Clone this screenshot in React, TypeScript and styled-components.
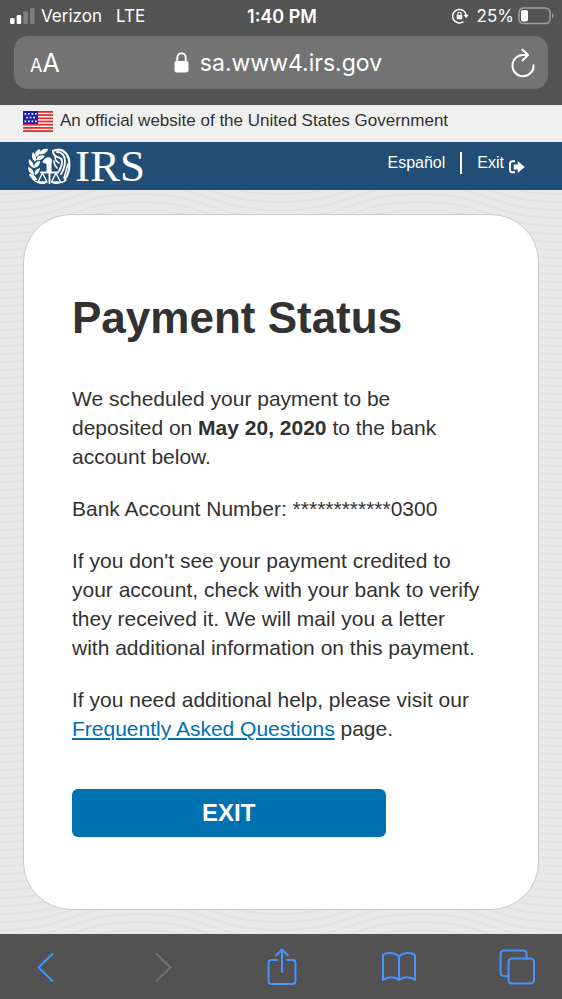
import React from "react";
import styled, { createGlobalStyle } from "styled-components";

const Global = createGlobalStyle`
  * { box-sizing: border-box; }
  body { margin: 0; background: #e8e8e8; color: #323232; font-family: "Liberation Sans", Arial, sans-serif; }
  button, input { font: inherit; color: inherit; }
`;

const Screen = styled.div`
  min-height: 100vh;
  display: flex;
  flex-direction: column;
`;

const BrowserTop = styled.header`
  height: 105px;
  padding: 0 14px;
  background: #545454;
  color: #fff;
  font-family: Inter, "Liberation Sans", sans-serif;
`;

const StatusBar = styled.div`
  height: 36px;
  margin: 0 -6px 0 -4px;
  padding-bottom: 4px;
  display: grid;
  grid-template-columns: 1fr auto 1fr;
  align-items: center;
  font-size: 17px;
`;

const StatusGroup = styled.div<{ $end?: boolean }>`
  display: flex;
  align-items: center;
  gap: ${(p) => (p.$end ? 4 : 6)}px;
  justify-content: ${(p) => (p.$end ? "flex-end" : "flex-start")};
`;

const Network = styled.span`
  margin-left: 8px;
`;

const Charge = styled.span`
  margin-left: 4px;
`;

const Time = styled.time`
  font-size: 18px;
  font-weight: 600;
`;

const AddressBar = styled.form`
  height: 53px;
  padding: 0 12px 0 16px;
  display: flex;
  align-items: center;
  justify-content: space-between;
  border-radius: 14px;
  background: #737373;
`;

const IconButton = styled.button`
  padding: 0;
  display: flex;
  align-items: baseline;
  border: 0;
  background: none;
  cursor: pointer;
`;

const SmallA = styled.span`
  font-size: 18px;
`;

const LargeA = styled.span`
  font-size: 25px;
`;

const Location = styled.label`
  display: flex;
  align-items: center;
  gap: 11px;
`;

const Address = styled.input`
  width: 196px;
  padding: 0;
  border: 0;
  outline: 0;
  background: none;
  font-size: 23px;
`;

const OfficialBanner = styled.div`
  height: 37px;
  padding: 0 23px 5px;
  display: flex;
  align-items: center;
  gap: 7px;
  background: #f0f0f0;
  font-size: 17px;
`;

const SiteHeader = styled.div`
  height: 48px;
  padding: 0 37px 0 28px;
  display: flex;
  align-items: center;
  justify-content: space-between;
  background: #224e76;
  color: #fff;
`;

const Brand = styled.a`
  display: flex;
  align-items: center;
  gap: 4px;
  color: inherit;
  text-decoration: none;
  font: 45px/48px "Liberation Serif", "Times New Roman", serif;
`;

const SiteNav = styled.nav`
  padding-bottom: 7px;
  display: flex;
  align-items: center;
  font-size: 16px;
  line-height: 22px;
`;

const NavLink = styled.a<{ $divided?: boolean }>`
  display: flex;
  align-items: flex-end;
  gap: 5px;
  margin-left: ${(p) => (p.$divided ? 15 : 0)}px;
  padding-left: ${(p) => (p.$divided ? 15 : 0)}px;
  border-left: ${(p) => (p.$divided ? "2px solid #fff" : "0")};
  color: inherit;
  text-decoration: none;
`;

const waveLines = Array.from({ length: 6 }, (_, i) => {
  const y = i * 8 + 4;
  return `M0 ${y}C70 ${y} 70 ${y - 24} 140 ${y - 24}S210 ${y} 280 ${y}`;
}).join("");

const waves = encodeURIComponent(
  `<svg xmlns="http://www.w3.org/2000/svg" width="280" height="8"><path d="${waveLines}" fill="none" stroke="#e3e3e3" stroke-width="2"/></svg>`
);

const Content = styled.main`
  flex: 1;
  padding: 24px 23px;
  background: #e9e9e9 url("data:image/svg+xml,${waves}");
`;

const Card = styled.section`
  min-height: 100%;
  padding: 73px 48px 72px;
  border: 1px solid #c8c8c8;
  border-radius: 48px;
  background: #fff;
`;

const Title = styled.h1`
  margin: 0 0 36px;
  font-size: 44px;
  line-height: 60px;
`;

const Text = styled.p`
  margin: 0 0 23px;
  padding-right: 6px;
  font-size: 21px;
  line-height: 29px;
`;

const TextLink = styled.a`
  color: #0071b2;
`;

const ExitButton = styled.button`
  width: 75%;
  height: 48px;
  margin-top: 46px;
  display: block;
  border: 0;
  border-radius: 6px;
  background: #0071b0;
  color: #fff;
  font-size: 24px;
  font-weight: 700;
  cursor: pointer;
`;

const Toolbar = styled.footer`
  height: 66px;
  padding: 0 27px 0 28px;
  display: flex;
  align-items: center;
  justify-content: space-between;
  background: #525252;
  color: #4794ff;
`;

const ToolButton = styled(IconButton)`
  width: 36px;
  justify-content: center;
`;

function Signal() {
  return (
    <svg width="25" height="16" viewBox="0 0 25 16" fill="#fff" aria-hidden="true">
      <rect x="0" y="10" width="4.500" height="6" rx="1.200" />
      <rect x="6.700" y="7" width="4.500" height="9" rx="1.200" />
      <rect x="13.400" y="3.500" width="4.500" height="12.500" rx="1.200" opacity=".25" />
      <rect x="20.100" y="0" width="4.500" height="16" rx="1.200" opacity=".25" />
    </svg>
  );
}

function RotationLock() {
  return (
    <svg width="17" height="16" viewBox="0 0 17 16" fill="none" stroke="#fff" strokeWidth="1.500" aria-hidden="true">
      <path d="M11.500 13.700A6.800 6.800 0 1 1 14.200 7.200" />
      <path d="M11.600 6.800h5l-2.500 3.400z" fill="#fff" stroke="none" />
      <rect x="4.700" y="7" width="5.600" height="4.200" rx=".6" fill="#fff" stroke="none" />
      <path d="M5.800 7.200V5.900a1.700 1.700 0 0 1 3.400 0v1.300" strokeWidth="1.100" />
    </svg>
  );
}

function Battery() {
  return (
    <svg width="36" height="18" viewBox="0 0 36 18" fill="none" aria-hidden="true">
      <rect x="1" y="1" width="31" height="15.600" rx="4.500" stroke="#a0a0a0" strokeWidth="1.500" />
      <rect x="3" y="3" width="7" height="11.600" rx="2" fill="#fff" />
      <path d="M34 6.300c2 .8 2 4.200 0 5z" fill="#a0a0a0" />
    </svg>
  );
}

function Padlock() {
  return (
    <svg width="15" height="21" viewBox="0 0 15 21" fill="none" aria-hidden="true">
      <rect x="0.500" y="9" width="14" height="11.500" rx="2" fill="#fff" />
      <path d="M3.300 10V5.500a4.200 4.200 0 0 1 8.400 0V10" stroke="#fff" strokeWidth="1.900" />
    </svg>
  );
}

function Reload() {
  return (
    <svg width="26" height="30" viewBox="0 0 26 30" fill="none" stroke="#fff" strokeWidth="2" strokeLinecap="round" strokeLinejoin="round" aria-hidden="true">
      <path d="M17.800 7H13A10.600 10.600 0 1 0 23.600 17.200M12.500 1.800l5.600 5.200-5.600 5.400" />
    </svg>
  );
}

const stars = [
  [1.500, 2], [5, 2], [8.500, 2], [12, 2],
  [3.200, 5.700], [6.700, 5.700], [10.200, 5.700],
  [1.500, 9.500], [5, 9.500], [8.500, 9.500], [12, 9.500],
];

function Flag() {
  return (
    <svg width="30" height="21" viewBox="0 0 30 21" role="img" aria-label="U.S. flag">
      <path fill="#fff" d="M0 0h30v21H0z" />
      {[0, 3.200, 6.400, 9.600, 12.800, 16, 19.200].map((y) => (
        <rect key={y} y={y} width="30" height="1.800" fill="#e92b25" />
      ))}
      <path fill="#1c1cb8" d="M0 0h15v13H0z" />
      {stars.map(([x, y]) => (
        <rect key={`${x}-${y}`} x={x} y={y} width="1.700" height="1.700" fill="#fff" />
      ))}
    </svg>
  );
}

function Eagle() {
  return (
    <svg width="43" height="37" viewBox="0 0 43 37" fill="none" stroke="#fff" strokeLinecap="round" strokeLinejoin="round" aria-hidden="true">
      <g fill="#fff" stroke="none">
        <path d="M20 1c-4-1-8 1-9 5 4 1 8-1 9-5z" />
        <path d="M12 1C8 2 6 5 8 9c3-1 5-4 4-8z" />
        <path d="M17 8c-4-2-8 0-9 4 4 1 7-1 9-4z" />
        <path d="M5 4c-2 4-1 7 2 10 2-3 1-7-2-10z" />
        <path d="M1 11c-1 4 1 8 5 9 0-4-2-7-5-9z" />
        <path d="M12 13c-4 0-6 3-6 7 4-1 6-3 6-7z" />
        <path d="M0 19c0 4 2 7 6 8 0-4-2-7-6-8z" />
        <path d="M12 20c-4 1-6 4-5 7 3-1 5-4 5-7z" />
        <path d="M1 26c1 4 4 6 8 6-1-4-4-6-8-6z" />
      </g>
      <path d="M5 31c3 4 7 4 11 4M38 32c-3 3-7 3-11 3" strokeWidth="1.400" />
      <path d="M15 14c1-3 4-5 7-4 2 1 2 3 1 5v9h-4v-8z" fill="#fff" strokeWidth="1" />
      <path d="M21.500 17v18M13 24.500h17" strokeWidth="1.900" />
      <path d="m14.500 25-4.500 9h9zM28 25l-4.500 9h9z" strokeWidth="1.400" />
      <path d="M9.500 34h10l-3 2h-4zM23 34h10l-3 2h-4z" fill="#fff" stroke="none" />
      <path d="M25 3c8-4 14 1 16 9 1 8-1 15-4 19" strokeWidth="2.200" />
      <path d="M25 3c0 4 3 6 7 7 3 1 2 6 1 9l-2 4" strokeWidth="2" />
      <path d="M29 4c5 0 8 4 8 9 0 6-2 10-4 13" strokeWidth="1.900" />
      <path d="M27 9c0 3 2 5 4 6M26 13c0 3 1 5 3 7M40 16l-4 14" strokeWidth="1.500" />
    </svg>
  );
}

function ExitIcon() {
  return (
    <svg width="16" height="14" viewBox="0 0 16 14" fill="none" aria-hidden="true">
      <path d="M6 1.200H3.500Q1 1.200 1 3.700v6Q1 12.300 3.500 12.300H6" stroke="#fff" strokeWidth="1.900" />
      <path fill="#fff" d="M4.700 4.500h4V1l7 6-7 6V9.500h-4z" />
    </svg>
  );
}

function ToolbarIcon({ name }: { name: string }) {
  const common = { fill: "none", stroke: "currentColor", strokeWidth: 2, strokeLinecap: "round" as const, strokeLinejoin: "round" as const, "aria-hidden": true };
  if (name === "Back") return <svg width="20" height="30" viewBox="0 0 20 30" {...common}><path d="M16.500 2 2.500 15.500l14 13.500" /></svg>;
  if (name === "Forward") return <svg width="20" height="30" viewBox="0 0 20 30" {...common} stroke="#737373"><path d="m2.500 2 14 13.500L2.500 29" /></svg>;
  if (name === "Share") return <svg width="30" height="38" viewBox="0 0 30 38" {...common}><path d="M10 12H4.500Q1.500 12 1.500 15v18q0 3 3 3h21q3 0 3-3V15q0-3-3-3H20M15 24V1.500M9 7.500l6-6 6 6" /></svg>;
  if (name === "Bookmarks") return <svg width="36" height="32" viewBox="0 0 36 32" {...common}><path d="M18 5.500C14 1.500 6 .8 2 4v25c5-4 12-3.500 16 0 4-3.500 11-4 16 0V4C30 .8 22 1.500 18 5.500V29" /></svg>;
  return <svg width="36" height="36" viewBox="0 0 36 36" {...common}><rect x="9.500" y="9.500" width="25.500" height="25" rx="3.500" /><path d="M9.500 27H5q-3.500 0-3.500-3.500V5Q1.500 1.500 5 1.500h19Q27.500 1.500 27.500 5v4.500" /></svg>;
}

export default function App() {
  return (
    <Screen>
      <Global />
      <BrowserTop>
        <StatusBar>
          <StatusGroup><Signal /><span>Verizon</span><Network>LTE</Network></StatusGroup>
          <Time>1:40 PM</Time>
          <StatusGroup $end><RotationLock /><Charge>25%</Charge><Battery /></StatusGroup>
        </StatusBar>
        <AddressBar>
          <IconButton type="button" aria-label="Text size"><SmallA>A</SmallA><LargeA>A</LargeA></IconButton>
          <Location><Padlock /><Address aria-label="Address" defaultValue="sa.www4.irs.gov" /></Location>
          <IconButton type="button" aria-label="Reload"><Reload /></IconButton>
        </AddressBar>
      </BrowserTop>
      <OfficialBanner><Flag /><span>An official website of the United States Government</span></OfficialBanner>
      <SiteHeader>
        <Brand href="#"><Eagle />IRS</Brand>
        <SiteNav>
          <NavLink href="#">Español</NavLink>
          <NavLink href="#" $divided>Exit <ExitIcon /></NavLink>
        </SiteNav>
      </SiteHeader>
      <Content>
        <Card>
          <Title>Payment Status</Title>
          <Text>We scheduled your payment to be deposited on <strong>May 20, 2020</strong> to the bank account below.</Text>
          <Text>Bank Account Number: ************0300</Text>
          <Text>If you don't see your payment credited to your account, check with your bank to verify they received it. We will mail you a letter with additional information on this payment.</Text>
          <Text>If you need additional help, please visit our <TextLink href="#">Frequently Asked Questions</TextLink> page.</Text>
          <ExitButton type="button">EXIT</ExitButton>
        </Card>
      </Content>
      <Toolbar>
        {["Back", "Forward", "Share", "Bookmarks", "Tabs"].map((name) => (
          <ToolButton key={name} type="button" aria-label={name}><ToolbarIcon name={name} /></ToolButton>
        ))}
      </Toolbar>
    </Screen>
  );
}
